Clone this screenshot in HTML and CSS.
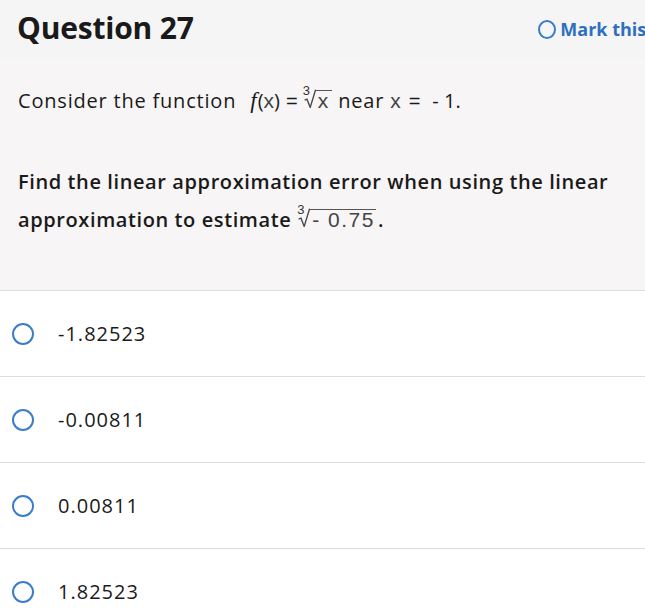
FILE: index.html
```html
<!DOCTYPE html>
<html>
<head>
<meta charset="utf-8">
<link rel="stylesheet" href="styles.css">
</head>
<body>
<div class="page">
  <header class="head">
    <h1 class="title">Question 27</h1>
    <div class="mark"><span class="ring ring-sm"></span><span class="mark-text">Mark this question</span></div>
  </header>
  <section class="prompt">
    <p class="intro">Consider the function <span class="math"><span class="fi">f</span>(<span class="v">x</span>)<span class="eq">=</span><span class="root"><span class="idx">3</span><svg class="rad" viewBox="0 0 12 19" width="12" height="19"><path d="M0.6 11.2 L3 10.2 L6.2 18.4 L11.6 0.75" fill="none" stroke="#4a4a4a" stroke-width="1.4"/></svg><span class="under">x</span></span></span> near <span class="math"><span class="v">x</span><span class="eq2">=</span>- 1</span>.</p>
    <p class="task">Find the linear approximation error when using the linear approximation to estimate <span class="math"><span class="root"><span class="idx">3</span><svg class="rad" viewBox="0 0 12 19" width="12" height="19"><path d="M0.6 11.2 L3 10.2 L6.2 18.4 L11.6 0.75" fill="none" stroke="#4a4a4a" stroke-width="1.4"/></svg><span class="under">- 0.75</span></span></span><span class="dot">.</span></p>
  </section>
  <ul class="options">
    <li class="opt"><span class="ring"></span><span class="val">-1.82523</span></li>
    <li class="opt"><span class="ring"></span><span class="val">-0.00811</span></li>
    <li class="opt"><span class="ring"></span><span class="val">0.00811</span></li>
    <li class="opt"><span class="ring"></span><span class="val">1.82523</span></li>
  </ul>
</div>
</body>
</html>
```
FILE: styles.css
```css
html, body { margin: 0; padding: 0; background: #fff; overflow: hidden; }
body { font-family: "Open Sans", "Liberation Sans", sans-serif; color: #1a1a1a; width: 645px; }
.page { width: 645px; }
.head {
  background: #f5f5f5;
  display: flex; align-items: center; justify-content: space-between;
  height: 58px; padding: 0 0 0 17px; white-space: nowrap; overflow: hidden;
}
.title { margin: 0; font-size: 30px; font-weight: 700; letter-spacing: -0.2px; color: #1a1a1a; line-height: 1; padding-bottom: 2px; }
.mark { display: flex; align-items: center; gap: 4px; margin-right: -85px; color: #2f6fc0; font-size: 18px; font-weight: 700; }
.mark-text { letter-spacing: 0; }
.ring { display: inline-block; width: 19px; height: 19px; border: 2px solid #3a7dcc; border-radius: 50%; box-sizing: border-box; flex: none; }
.ring-sm { width: 18px; height: 19px; }
.prompt { background: #f7f5f5; padding: 23px 17px 51px 18px; border-bottom: 1px solid #dedde6; }
.intro { margin: 0; font-size: 20px; line-height: 40px; letter-spacing: 0.8px; }
.task { margin: 42px 0 0; font-size: 20px; font-weight: 600; line-height: 38px; letter-spacing: 0.6px; }
.math { font-weight: 400; white-space: nowrap; letter-spacing: 0; }
.fi { font-family: "Liberation Serif", serif; font-style: italic; font-size: 23px; margin-left: 8px; margin-right: 1px; }
.v { font-family: "Liberation Sans Narrow", "Liberation Sans", sans-serif; color: #444; font-size: 21px; }
.eq { margin: 0 5px 0 6px; font-family: "Liberation Sans", sans-serif; }
.eq2 { margin: 0 12px 0 8px; font-family: "Liberation Sans", sans-serif; }
.root { position: relative; display: inline-flex; align-items: baseline; padding-left: 1px; padding-top: 4px; }
.idx { position: absolute; left: 0; top: -1px; font-size: 13px; line-height: 1; color: #333; font-family: "Liberation Sans", sans-serif; }
.rad { display: block; flex: none; }
.under { display: block; border-top: 1.5px solid #555; padding: 0 4px 0 2px; font-family: "Liberation Sans Narrow", "Liberation Sans", sans-serif; color: #444; line-height: 19px; font-size: 21px; }
.task .under { letter-spacing: 1.5px; padding-right: 1px; }
.dot { margin-left: 2px; }
.options { list-style: none; margin: 0; padding: 0; }
.opt { display: flex; align-items: center; height: 85px; border-bottom: 1px solid #dedede; padding-left: 12px; }
.opt .ring { width: 22px; height: 22px; }
.val { margin-left: 24px; font-size: 20px; letter-spacing: 1px; }
```
